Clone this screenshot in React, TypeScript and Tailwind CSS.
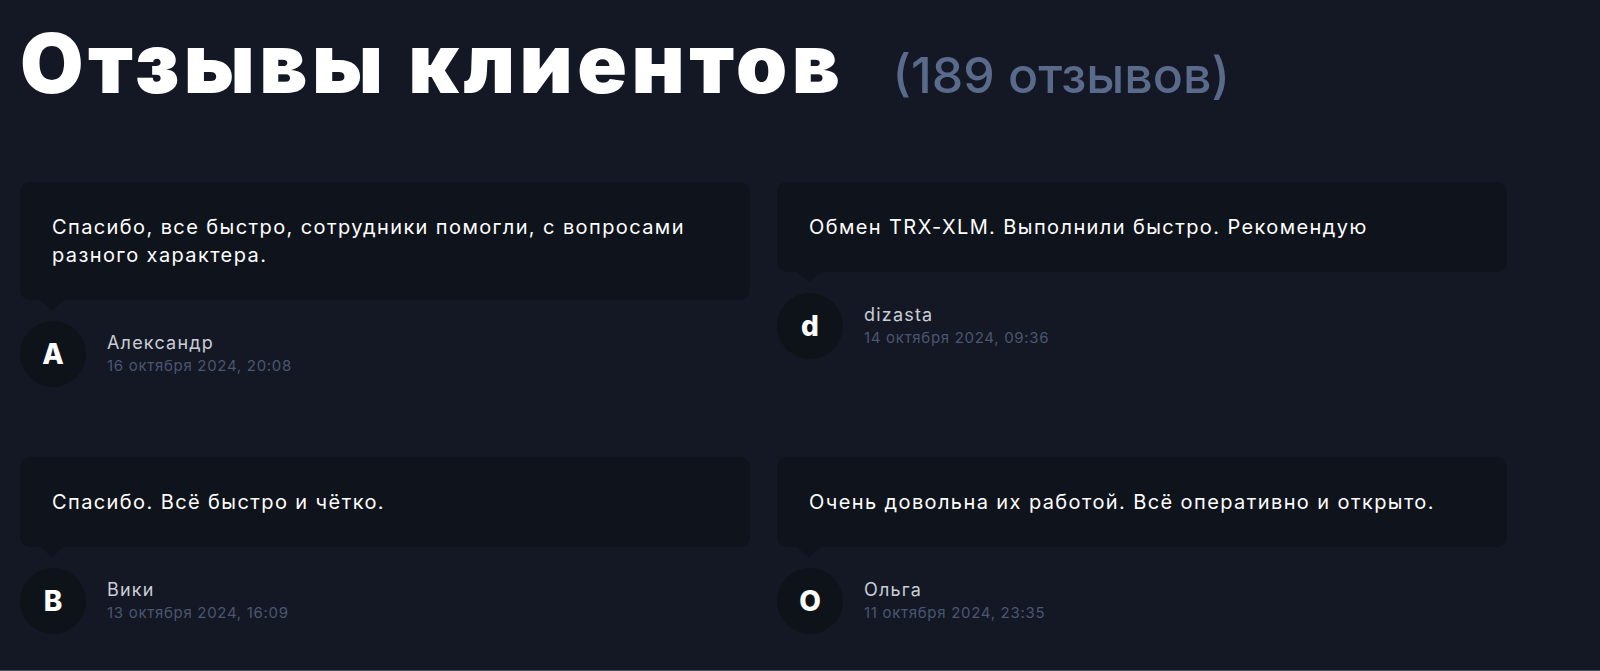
import React from 'react';

type Review = {
  text: string;
  name: string;
  date: string;
  letter: string;
};

const REVIEWS: Review[] = [
  {
    text: 'Спасибо, все быстро, сотрудники помогли, с вопросами разного характера.',
    name: 'Александр',
    date: '16 октября 2024, 20:08',
    letter: 'A',
  },
  {
    text: 'Обмен TRX-XLM. Выполнили быстро. Рекомендую',
    name: 'dizasta',
    date: '14 октября 2024, 09:36',
    letter: 'd',
  },
  {
    text: 'Спасибо. Всё быстро и чётко.',
    name: 'Вики',
    date: '13 октября 2024, 16:09',
    letter: 'B',
  },
  {
    text: 'Очень довольна их работой. Всё оперативно и открыто.',
    name: 'Ольга',
    date: '11 октября 2024, 23:35',
    letter: 'O',
  },
];

function ReviewCard({ review }: { review: Review }) {
  return (
    <div className="flex flex-col">
      <div className="relative rounded-[10px] bg-[#0f131b] px-8 py-[31px] after:absolute after:left-[20px] after:top-full after:border-x-[12px] after:border-t-[10px] after:border-x-transparent after:border-t-[#0f131b] after:content-['']">
        <p className="pr-4 text-[20px] leading-[28px] tracking-[1.4px] text-white">{review.text}</p>
      </div>
      <div className="mt-[21px] flex items-center gap-[21px]">
        <div className="flex h-[66px] w-[66px] shrink-0 items-center justify-center rounded-full bg-[#0e1219] text-[28px] font-extrabold text-white">
          {review.letter}
        </div>
        <div className="flex flex-col pb-[2px]">
          <span className="text-[18px] leading-[25px] tracking-[1.2px] text-[#c9cdd6]">{review.name}</span>
          <span className="text-[15px] leading-[22px] tracking-[0.7px] text-[#4a5671]">{review.date}</span>
        </div>
      </div>
    </div>
  );
}

export default function App() {
  return (
    <div className="h-[671px] overflow-hidden border-b border-[#4b515c] bg-[#131824] font-[Inter,'Noto_Sans',sans-serif]">
      <div className="px-5">
        <div className="flex items-baseline gap-[48px] pt-[14px]">
          <h1 className="text-[82px] font-black leading-[100px] tracking-[4.5px] text-white">
            Отзывы клиентов
          </h1>
          <span className="text-[50px] font-medium text-[#5a6a8a]">(189 отзывов)</span>
        </div>
        <div className="mt-[68px] grid grid-cols-[730px_730px] items-start gap-x-[27px] gap-y-[70px]">
          {REVIEWS.map((r) => (
            <ReviewCard key={r.name} review={r} />
          ))}
        </div>
      </div>
    </div>
  );
}
